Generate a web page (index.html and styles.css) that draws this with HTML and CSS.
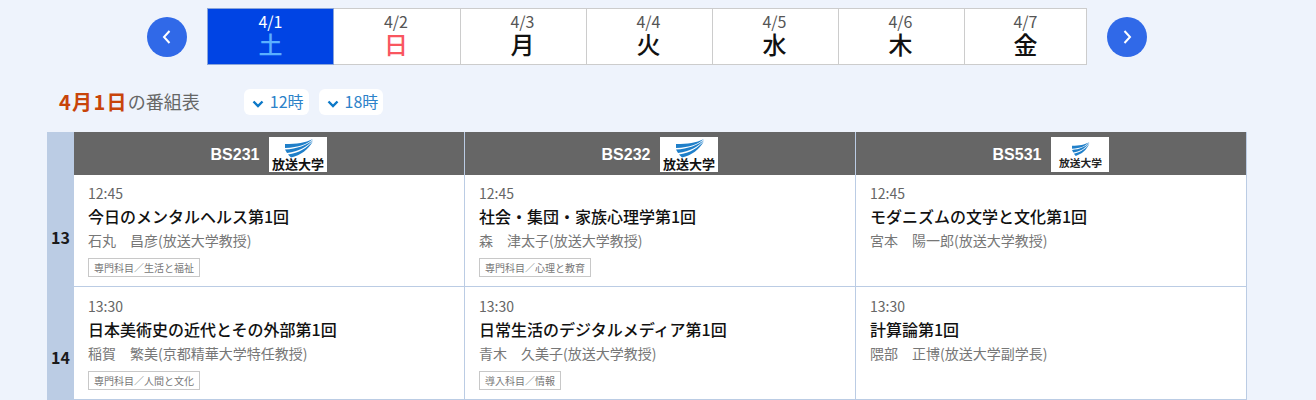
FILE: index.html
```html
<!DOCTYPE html>
<html lang="ja">
<head>
<meta charset="utf-8">
<title>番組表</title>
<link rel="stylesheet" href="styles.css">
</head>
<body>
<svg class="defs" width="0" height="0" aria-hidden="true">
  <g id="wing" fill="#1f7fc9">
    <path d="M16 7 C28 7 36 6 44 2 C38 7 30 10.500 16 11 Z"/>
    <path d="M16 12.500 C28 12 38 8 44 3 C38 10 30 14.500 18 16 Z"/>
    <path d="M19 17.500 C30 16 38 11 44 4 C39 13 32 18 22 20.500 Z"/>
  </g>
</svg>

<nav class="date-nav">
  <a class="round-btn"><svg width="12" height="16" viewBox="0 0 12 16"><path d="M8.500 2 L3 8 L8.500 14" fill="none" stroke="#fff" stroke-width="2"/></svg></a>
  <ul class="date-tabs">
    <li class="date-tab is-active"><span class="d">4/1</span><span class="w sat">土</span></li>
    <li class="date-tab"><span class="d">4/2</span><span class="w sun">日</span></li>
    <li class="date-tab"><span class="d">4/3</span><span class="w">月</span></li>
    <li class="date-tab"><span class="d">4/4</span><span class="w">火</span></li>
    <li class="date-tab"><span class="d">4/5</span><span class="w">水</span></li>
    <li class="date-tab"><span class="d">4/6</span><span class="w">木</span></li>
    <li class="date-tab"><span class="d">4/7</span><span class="w">金</span></li>
  </ul>
  <a class="round-btn"><svg width="12" height="16" viewBox="0 0 12 16"><path d="M3.500 2 L9 8 L3.500 14" fill="none" stroke="#fff" stroke-width="2"/></svg></a>
</nav>

<div class="heading">
  <h2 class="title"><strong>4月1日</strong><span class="title-rest">の番組表</span></h2>
  <a class="jump"><svg class="chev" width="12" height="8" viewBox="0 0 12 8"><path d="M1.500 1.500 L6 6 L10.500 1.500" fill="none" stroke="#0b78c8" stroke-width="2.400"/></svg>12時</a>
  <a class="jump"><svg class="chev" width="12" height="8" viewBox="0 0 12 8"><path d="M1.500 1.500 L6 6 L10.500 1.500" fill="none" stroke="#0b78c8" stroke-width="2.400"/></svg>18時</a>
</div>

<div class="grid">
  <div class="corner"></div>
  <div class="ch"><span>BS231</span><svg class="logo" viewBox="0 0 58 35"><use href="#wing"/><text x="29" y="32" text-anchor="middle" class="logo-text">放送大学</text></svg></div>
  <div class="ch"><span>BS232</span><svg class="logo" viewBox="0 0 58 35"><use href="#wing"/><text x="29" y="32" text-anchor="middle" class="logo-text">放送大学</text></svg></div>
  <div class="ch"><span>BS531</span><svg class="logo" viewBox="0 0 58 35"><use href="#wing" transform="translate(11.100 3.500) scale(.62 .75)"/><text x="29.500" y="30" text-anchor="middle" class="logo-text-small">放送大学</text></svg></div>

  <div class="hour h13">13</div>
  <div class="prog">
    <div class="time">12:45</div>
    <div class="name">今日のメンタルヘルス第1回</div>
    <div class="who">石丸　昌彦(放送大学教授)</div>
    <div class="tag">専門科目／生活と福祉</div>
  </div>
  <div class="prog">
    <div class="time">12:45</div>
    <div class="name">社会・集団・家族心理学第1回</div>
    <div class="who">森　津太子(放送大学教授)</div>
    <div class="tag">専門科目／心理と教育</div>
  </div>
  <div class="prog">
    <div class="time">12:45</div>
    <div class="name">モダニズムの文学と文化第1回</div>
    <div class="who">宮本　陽一郎(放送大学教授)</div>
  </div>

  <div class="hour h14">14</div>
  <div class="prog">
    <div class="time">13:30</div>
    <div class="name">日本美術史の近代とその外部第1回</div>
    <div class="who">稲賀　繁美(京都精華大学特任教授)</div>
    <div class="tag">専門科目／人間と文化</div>
  </div>
  <div class="prog">
    <div class="time">13:30</div>
    <div class="name">日常生活のデジタルメディア第1回</div>
    <div class="who">青木　久美子(放送大学教授)</div>
    <div class="tag">導入科目／情報</div>
  </div>
  <div class="prog">
    <div class="time">13:30</div>
    <div class="name">計算論第1回</div>
    <div class="who">隈部　正博(放送大学副学長)</div>
  </div>
</div>
</body>
</html>
```
FILE: styles.css
```css
* { box-sizing: border-box; }
html, body { margin: 0; height: 400px; overflow: hidden; }
body {
  background: #eef3fc;
  font-family: "Noto Sans CJK JP", "Noto Sans", sans-serif;
  color: #111;
}
.defs { position: absolute; }
.logo-text { font: 700 13px "Noto Sans CJK JP", sans-serif; fill: #111; }
.logo-text-small { font: 700 10.750px "Noto Sans CJK JP", sans-serif; fill: #222; }

.date-nav {
  display: flex;
  justify-content: center;
  align-items: center;
  gap: 20px;
  padding-top: 8px;
  padding-right: 22px;
}
.round-btn {
  width: 40px; height: 40px;
  border-radius: 50%;
  background: #3069e8;
  display: flex; align-items: center; justify-content: center;
}
.date-tabs {
  display: grid;
  grid-template-columns: 127px 127px 126px 126px 126px 126px 122px;
  margin: 0; padding: 0;
  list-style: none;
}
.date-tab {
  height: 57px;
  background: #fff;
  border: 1px solid #ccc;
  border-left-width: 0;
  display: flex; flex-direction: column; align-items: center;
  padding-top: 2px;
}
.date-tab:first-child { border-left-width: 1px; }
.date-tab + .date-tab { padding-right: 2px; }
.date-tab:last-child { padding-right: 0; }
.date-tab.is-active { background: #0044e4; border-color: #8aa5da; color: #fff; }
.d { font-size: 16px; line-height: 20px; color: #555; }
.is-active .d { color: #fff; }
.w { font-size: 24px; line-height: 26px; font-weight: 500; color: #111; }
.w.sat { color: #5ab0ff; }
.w.sun { color: #f9565f; }

.heading {
  display: flex;
  align-items: center;
  height: 26px;
  margin-top: 24px;
  padding-left: 59px;
}
.title { margin: 0 44px 0 0; font-weight: 400; font-size: 18px; line-height: 26px; color: #666; display: flex; align-items: center; }
.title strong { font-size: 20px; letter-spacing: 1.300px; color: #c8440a; font-weight: 700; }
.title-rest { padding-bottom: 2px; }
.jump {
  display: flex; align-items: center; gap: 6px;
  height: 26px;
  margin-right: 10px;
  padding: 0 5px 2px 8px;
  border-radius: 6px;
  background: #fff;
  font-size: 16px;
  color: #2c82c9;
}
.chev { margin-top: 6px; }

.grid {
  display: grid;
  grid-template-columns: 27px repeat(3, 391px);
  grid-template-rows: 43px 112px 113px;
  width: 1200px;
  margin: 17px 0 0 47px;
}
.corner { background: #bbcce4; }
.ch {
  background: #666;
  color: #fff;
  display: flex; align-items: center; justify-content: center;
  gap: 10px;
  padding-top: 2px;
  font-family: "Liberation Sans", sans-serif;
  font-weight: 700;
  font-size: 16px;
  border-right: 1px solid #bbcce4;
}
.logo { width: 58px; height: 35px; background: #fff; }
.hour {
  background: #bbcce4;
  display: flex; justify-content: center;
  font-size: 16px; font-weight: 700;
  color: #1a1a1a;
}
.h13 { padding-top: 50px; }
.h14 { padding-top: 58px; }
.prog {
  background: #fff;
  border-right: 1px solid #bbcce4;
  border-bottom: 1px solid #bbcce4;
  padding: 8px 14px 0;
}
.h14 ~ .prog { padding-top: 9px; }
.time { font-size: 14px; line-height: 20px; color: #666; }
.name { font-size: 16px; font-weight: 500; line-height: 22px; margin-top: 2px; color: #111; }
.who { font-size: 14px; line-height: 20px; margin-top: 3px; color: #777; }
.tag {
  display: inline-block;
  margin-top: 8px;
  height: 19px;
  padding: 0 5px;
  border: 1px solid #c8c8c8;
  font-size: 10px;
  line-height: 17px;
  color: #777;
}
```
